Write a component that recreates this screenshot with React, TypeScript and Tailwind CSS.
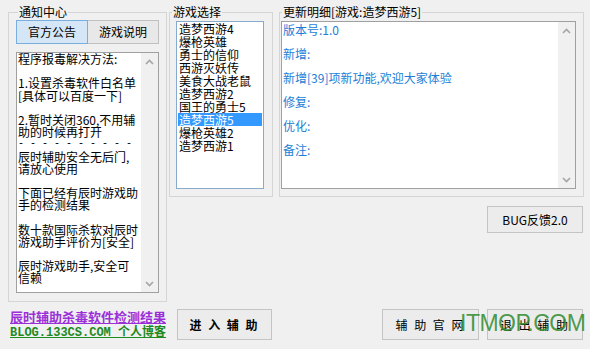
import React from 'react';

const noticeLines = [
  '程序报毒解决方法:',
  '',
  '1.设置杀毒软件白名单',
  '[具体可以百度一下]',
  '',
  '2.暂时关闭360,不用辅',
  '助的时候再打开',
  '- - - - - - - - - -',
  '辰时辅助安全无后门,',
  '请放心使用',
  '',
  '下面已经有辰时游戏助',
  '手的检测结果',
  '',
  '数十款国际杀软对辰时',
  '游戏助手评价为[安全]',
  '',
  '辰时游戏助手,安全可',
  '信赖',
];

const games = [
  '造梦西游4',
  '爆枪英雄',
  '勇士的信仰',
  '西游灭妖传',
  '美食大战老鼠',
  '造梦西游2',
  '国王的勇士5',
  '造梦西游5',
  '爆枪英雄2',
  '造梦西游1',
];

const updateLines = ['版本号:1.0', '', '新增:', '', '新增[39]项新功能,欢迎大家体验', '', '修复:', '', '优化:', '', '备注:'];

const Chevron = ({ down }: { down?: boolean }) => (
  <svg width="9" height="6" viewBox="0 0 9 6">
    <polyline
      points={down ? '1,1 4.5,4.5 8,1' : '1,5 4.5,1.5 8,5'}
      fill="none"
      stroke="#a6a6a6"
      strokeWidth="1.7"
    />
  </svg>
);

const ScrollBar = () => (
  <div className="flex w-[17px] shrink-0 flex-col justify-between bg-[#f0f0f0]">
    <div className="flex h-[17px] items-center justify-center">
      <Chevron />
    </div>
    <div className="flex h-[17px] items-center justify-center">
      <Chevron down />
    </div>
  </div>
);

const GroupBox = ({ title, className, children }: { title: string; className: string; children: React.ReactNode }) => (
  <fieldset className={`min-w-0 border border-[#d5d5d5] ${className}`}>
    <legend className="ml-[2px] px-[1px] text-[12px] leading-[14px] text-black">{title}</legend>
    {children}
  </fieldset>
);

const App: React.FC = () => {
  return (
    <div className="relative flex h-[349px] w-[590px] overflow-hidden bg-[#f0f0f0] pl-[8px] pt-[5px] font-['Noto_Sans_CJK_SC',sans-serif] text-black">
      {/* left column */}
      <div className="flex w-[159px] flex-col">
        <GroupBox title="通知中心" className="h-[297px] px-[7px]">
          <div className="mt-[1px] flex h-[24px] text-[12px]">
            <button className="w-[72px] border border-[#7aaedf] bg-[#d5e6f6]">官方公告</button>
            <button className="w-[71px] border border-l-0 border-[#c0c0c0] bg-[#e8e8e8]">游戏说明</button>
          </div>
          <div className="mt-[8px] flex h-[241px] w-[143px] border border-[#a0a0a0] bg-white">
            <div className="flex-1 overflow-hidden pl-[1px] text-[12px] leading-[12.2px] whitespace-pre">
              {noticeLines.map((l, i) =>
                l.startsWith('-') ? (
                  <div key={i} className="h-[12.2px] font-['Liberation_Mono',monospace] text-[10px]">{l}</div>
                ) : (
                  <div key={i} className="h-[12.2px]">{l}</div>
                )
              )}
            </div>
            <ScrollBar />
          </div>
        </GroupBox>
        <div className="mt-[7px] pl-[2px] text-[13px] leading-[16px] font-bold whitespace-nowrap">
          <div className="text-[#9b30d9] underline">辰时辅助杀毒软件检测结果</div>
          <div className="font-['Liberation_Mono','Noto_Sans_CJK_SC',monospace] text-[12px] text-[#1f8a1f] underline">
            BLOG.133CS.COM 个人博客
          </div>
        </div>
      </div>

      {/* right side */}
      <div className="ml-[2px] flex w-[415px] flex-col">
        <div className="flex">
          <GroupBox title="游戏选择" className="h-[192px] w-[104px]">
            <div className="ml-[6px] mt-[2px] h-[168px] w-[88px] border border-[#86abcf] bg-white p-0 text-[12px] leading-[13px]">
              {games.map((g, i) => (
                <div
                  key={g}
                  className={`mx-[1px] h-[13px] px-[1px] whitespace-nowrap ${i === 7 ? 'bg-[#3399ff] text-white' : ''}`}
                >
                  {g}
                </div>
              ))}
            </div>
          </GroupBox>
          <GroupBox title="更新明细[游戏:造梦西游5]" className="ml-[6px] h-[192px] w-[305px]">
            <div className="ml-[1px] mt-[2px] flex h-[168px] w-[295px] border border-[#a0a0a0] bg-white">
              <div className="flex-1 pl-[1px] pt-[2px] text-[12px] leading-[12px] text-[#1c7ed6] whitespace-pre">
                {updateLines.map((l, i) => (
                  <div key={i} className="h-[12px]">{l}</div>
                ))}
              </div>
              <ScrollBar />
            </div>
          </GroupBox>
        </div>

        <button className="mr-[1px] mt-[9px] h-[27px] w-[96px] self-end border border-[#c4c4c4] bg-[#ececec] text-[12px]">
          BUG反馈2.0
        </button>

        <div className="mt-[76px] flex h-[31px] text-[12px] tracking-[2px]">
          <button className="ml-[8px] w-[95px] border border-[#c4c4c4] bg-[#ececec] font-bold">进 入 辅 助</button>
          <div className="ml-auto mr-[1px] flex gap-[8px]">
            <button className="w-[97px] border border-[#c4c4c4] bg-[#ececec]">辅 助 官 网</button>
            <button className="w-[96px] border border-[#c4c4c4] bg-[#ececec]">退 出 辅 助</button>
          </div>
        </div>
      </div>

      {/* watermark */}
      <div className="pointer-events-none absolute left-[460px] top-[311px] font-['Liberation_Sans',sans-serif] text-[23px] leading-[24px] tracking-[-0.5px] text-[#2e8b2e]/85">
        ITMOP.COM
      </div>
    </div>
  );
};

export default App;
